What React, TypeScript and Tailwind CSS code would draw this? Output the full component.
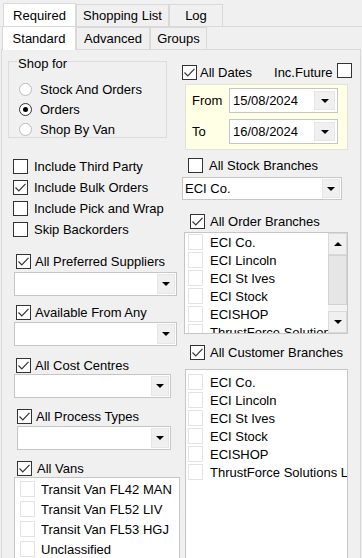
import React from "react";

const Check = ({ checked = false }: { checked?: boolean }) => (
  <span className="inline-flex w-[15px] h-[15px] shrink-0 items-center justify-center bg-white border border-[#333333]">
    {checked && (
      <svg width="13" height="13" viewBox="0 0 13 13">
        <path d="M1.5 6.5 L4.8 9.8 L11.5 2.8" fill="none" stroke="#333333" strokeWidth="1.2" />
      </svg>
    )}
  </span>
);

const ListBox = () => (
  <span className="inline-block w-[15px] h-[16px] shrink-0 bg-white border border-[#e3e3e3]" />
);

const Arrow = ({ up = false }: { up?: boolean }) => (
  <svg width="8" height="4" viewBox="0 0 8 4">
    <path d={up ? "M0 4h8L4 0z" : "M0 0h8L4 4z"} fill="#000" />
  </svg>
);

const Combo = ({ text = "", className = "" }: { text?: string; className?: string }) => (
  <div className={`flex bg-white border border-[#c6c6c6] ${className}`}>
    <div className="flex-1 flex items-center pl-[2px] whitespace-nowrap overflow-hidden">{text}</div>
    <div className="w-[18px] m-[1px] flex items-center justify-center bg-[#f0f0f0] border border-[#e6e6e6]">
      <Arrow />
    </div>
  </div>
);

const Radio = ({ checked = false }: { checked?: boolean }) => (
  <span
    className={`inline-flex w-[13px] h-[13px] shrink-0 rounded-full items-center justify-center bg-white border ${
      checked ? "border-[#333333]" : "border-[#bdbdbd]"
    }`}
  >
    {checked && <span className="w-[5px] h-[5px] rounded-full bg-black" />}
  </span>
);

const Tab = ({ label, w, selected = false }: { label: string; w: string; selected?: boolean }) => (
  <div
    className={`${w} flex items-center justify-center border border-b-0 border-[#d9d9d9] ${
      selected ? "h-[24px] bg-white relative z-10 -mb-[1px]" : "h-[22px] bg-[#f0f0f0]"
    }`}
  >
    {label}
  </div>
);

const DateRow = ({ label, value }: { label: string; value: string }) => (
  <div className="flex items-center h-[25px]">
    <div className="w-[43px] pl-[6px]">{label}</div>
    <div className="w-[109px] h-[25px] flex bg-white border border-[#c6c6c6]">
      <div className="flex-1 flex items-center pl-[3px]">{value}</div>
      <div className="w-[21px] my-[2px] mr-[2px] flex items-center justify-center bg-[#f0f0f0] border border-[#e6e6e6]">
        <Arrow />
      </div>
    </div>
  </div>
);

const branches = ["ECI Co.", "ECI Lincoln", "ECI St Ives", "ECI Stock", "ECISHOP"];

export default function App() {
  return (
    <div
      className="w-[362px] h-[558px] bg-[#f0f0f0] overflow-hidden text-[13px] leading-[15px] text-black"
      style={{ fontFamily: "'Liberation Sans', Arial, sans-serif" }}
    >
      {/* outer tabs */}
      <div className="flex items-end h-[26px] pl-[3px]">
        <Tab label="Required" w="w-[73px]" selected />
        <Tab label="Shopping List" w="w-[93px]" />
        <Tab label="Log" w="w-[54px]" />
      </div>
      <div className="h-[532px] border-t border-[#d9d9d9] pt-[2px] px-[1px]">
        {/* inner tabs */}
        <div className="flex items-end h-[20px] pl-[1px]">
          <Tab label="Standard" w="w-[74px]" selected />
          <Tab label="Advanced" w="w-[74px]" />
          <Tab label="Groups" w="w-[57px]" />
        </div>
        <div className="h-[510px] flex border border-b-0 border-[#d9d9d9] bg-[#f0f0f0]">
          {/* left column */}
          <div className="w-[178px] shrink-0 flex flex-col">
            <div className="ml-[6px] mt-[11px] w-[159px] h-[77px] border border-[#dcdcdc] flex flex-col">
              <div className="-mt-[6px] ml-[8px] px-[1px] w-fit bg-[#f0f0f0] leading-[15px]">Shop for</div>
              <div className="mt-[8px] pl-[10px] flex flex-col">
                <div className="flex items-center h-[20px] gap-[8px]">
                  <Radio />
                  <span>Stock And Orders</span>
                </div>
                <div className="flex items-center h-[20px] gap-[8px]">
                  <Radio checked />
                  <span>Orders</span>
                </div>
                <div className="flex items-center h-[20px] gap-[8px]">
                  <Radio />
                  <span>Shop By Van</span>
                </div>
              </div>
            </div>

            <div className="mt-[18px] pl-[11px] flex flex-col">
              {[
                ["Include Third Party", false],
                ["Include Bulk Orders", true],
                ["Include Pick and Wrap", false],
                ["Skip Backorders", false],
              ].map(([t, c]) => (
                <div key={t as string} className="flex items-center h-[21px] gap-[6px]">
                  <Check checked={c as boolean} />
                  <span>{t as string}</span>
                </div>
              ))}
            </div>

            <div className="mt-[12px] pl-[14px] flex items-center h-[20px] gap-[4px]">
              <Check checked />
              <span>All Preferred Suppliers</span>
            </div>
            <Combo className="ml-[12px] w-[163px] h-[24px]" />

            <div className="mt-[8px] pl-[14px] flex items-center h-[18px] gap-[4px]">
              <Check checked />
              <span>Available From Any</span>
            </div>
            <Combo className="ml-[12px] w-[163px] h-[24px]" />

            <div className="mt-[11px] pl-[14px] flex items-center h-[18px] gap-[4px]">
              <Check checked />
              <span>All Cost Centres</span>
            </div>
            <Combo className="ml-[12px] w-[157px] h-[24px]" />

            <div className="mt-[9px] pl-[15px] flex items-center h-[18px] gap-[4px]">
              <Check checked />
              <span>All Process Types</span>
            </div>
            <Combo className="mt-[1px] ml-[15px] w-[154px] h-[24px]" />

            <div className="mt-[9px] pl-[15px] flex items-center h-[18px] gap-[5px]">
              <Check checked />
              <span>All Vans</span>
            </div>
            <div className="ml-[12px] w-[166px] flex-1 bg-white border border-[#c6c6c6] border-b-0 pt-[1px] pl-[5px]">
              {["Transit Van FL42 MAN", "Transit Van FL52 LIV", "Transit Van FL53 HGJ", "Unclassified"].map((t) => (
                <div key={t} className="flex items-center h-[20px] gap-[6px]">
                  <ListBox />
                  <span className="whitespace-nowrap">{t}</span>
                </div>
              ))}
            </div>
          </div>

          {/* right column */}
          <div className="flex-1 flex flex-col">
            <div className="mt-[13px] pl-[2px] flex items-center h-[18px]">
              <Check checked />
              <span className="ml-[3px]">All Dates</span>
              <span className="ml-[22px]">Inc.Future</span>
              <span className="ml-[4px]">
                <Check />
              </span>
            </div>

            <div className="mt-[3px] ml-[5px] w-[163px] bg-[#ffffe6] border border-[#e2e2d6] pt-[3px] pb-[5px] flex flex-col gap-[6px]">
              <DateRow label="From" value="15/08/2024" />
              <DateRow label="To" value="16/08/2024" />
            </div>

            <div className="mt-[7px] pl-[8px] flex items-center h-[17px] gap-[6px]">
              <Check />
              <span>All Stock Branches</span>
            </div>
            <Combo text="ECI Co." className="mt-[3px] ml-[2px] w-[160px] h-[23px]" />

            <div className="mt-[12px] pl-[10px] flex items-center h-[18px] gap-[5px]">
              <Check checked />
              <span>All Order Branches</span>
            </div>
            <div className="mt-[2px] ml-[4px] w-[164px] h-[102px] flex bg-white border border-[#c6c6c6] overflow-hidden">
              <div className="flex-1 pl-[3px] overflow-hidden">
                {[...branches, "ThrustForce Solutions L"].map((t) => (
                  <div key={t} className="flex items-center h-[18px] gap-[7px]">
                    <ListBox />
                    <span className="whitespace-nowrap">{t}</span>
                  </div>
                ))}
              </div>
              <div className="w-[19px] flex flex-col bg-[#f0f0f0]">
                <div className="h-[22px] flex items-center justify-center bg-[#f0f0f0] border border-[#dadada]">
                  <Arrow up />
                </div>
                <div className="h-[50px] bg-[#e6e6e6] border border-[#d2d2d2]" />
                <div className="h-[6px] bg-[#f3f3f3]" />
                <div className="flex-1 flex items-center justify-center bg-[#f0f0f0] border border-[#dadada]">
                  <Arrow />
                </div>
              </div>
            </div>

            <div className="mt-[9px] pl-[10px] flex items-center h-[18px] gap-[5px]">
              <Check checked />
              <span>All Customer Branches</span>
            </div>
            <div className="mt-[8px] ml-[5px] w-[163px] flex-1 bg-white border border-[#c6c6c6] border-b-0 pt-[3px] pl-[2px] overflow-hidden">
              {[...branches, "ThrustForce Solutions L"].map((t) => (
                <div key={t} className="flex items-center h-[18px] gap-[7px]">
                  <ListBox />
                  <span className="whitespace-nowrap">{t}</span>
                </div>
              ))}
            </div>
          </div>
        </div>
      </div>
    </div>
  );
}
